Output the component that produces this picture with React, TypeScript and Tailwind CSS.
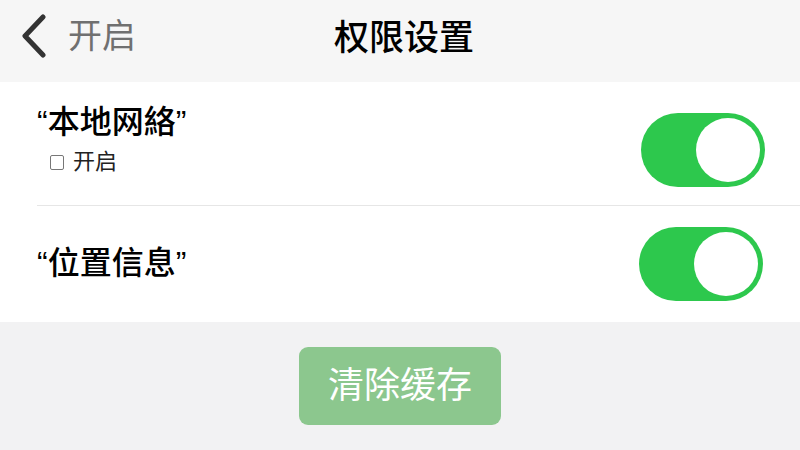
import React, { useState } from 'react';

const font = { fontFamily: '"Liberation Sans", "Noto Sans CJK SC", sans-serif' };

const Toggle: React.FC<{ on: boolean; onChange: () => void; className?: string }> = ({ on, onChange, className = '' }) => (
  <button
    onClick={onChange}
    className={`w-[124px] h-[74px] rounded-full p-[5px] flex items-center transition-colors ${on ? 'bg-[#2dc84d] justify-end' : 'bg-[#e5e5ea] justify-start'} ${className}`}
  >
    <span className="block w-[64px] h-[64px] rounded-full bg-white" />
  </button>
);

const App: React.FC = () => {
  const [network, setNetwork] = useState(true);
  const [location, setLocation] = useState(true);

  return (
    <div className="w-[800px] h-[450px] bg-[#f2f2f3] flex flex-col overflow-hidden" style={font}>
      {/* Nav bar */}
      <div className="h-[82px] bg-[#f6f6f6] flex items-center relative">
        <div className="flex items-center pl-[20px] gap-[20px] -mt-[10px]">
          <svg width="28" height="44" viewBox="0 0 28 44" fill="none">
            <path d="M23 3 L5 22 L23 41" stroke="#333" strokeWidth="5" strokeLinecap="round" strokeLinejoin="round" />
          </svg>
          <span className="text-[34px] text-[#707070] leading-none">开启</span>
        </div>
        <h1 className="absolute left-0 right-0 text-center text-[35px] font-medium text-black leading-none top-[20px] pl-[8px]">权限设置</h1>
      </div>

      {/* Settings list */}
      <div className="bg-white">
        <div className="h-[123px] flex items-center pl-[37px] pr-[35px]">
          <div className="flex-1 -mt-[8px]">
            <div className="text-[32px] font-medium text-black leading-none">“本地网絡”</div>
            <div className="flex items-center gap-[9px] mt-[13px] pl-[13px]">
              <span className="w-[14px] h-[15px] border-[1.5px] border-[#777] rounded-[2px]" />
              <span className="text-[22px] text-[#222] leading-none">开启</span>
            </div>
          </div>
          <Toggle on={network} onChange={() => setNetwork(!network)} className="mt-[12px]" />
        </div>
        <div className="ml-[37px] h-px bg-[#e6e6e6]" />
        <div className="h-[116px] flex items-center pl-[37px] pr-[37px]">
          <div className="flex-1 text-[32px] font-medium text-black leading-none -mt-[2px]">“位置信息”</div>
          <Toggle on={location} onChange={() => setLocation(!location)} />
        </div>
      </div>

      {/* Clear cache */}
      <div className="flex justify-center pt-[25px]">
        <button className="w-[202px] h-[78px] rounded-[9px] bg-[#8cc78e] text-white text-[36px] leading-none">清除缓存</button>
      </div>
    </div>
  );
};

export default App;
